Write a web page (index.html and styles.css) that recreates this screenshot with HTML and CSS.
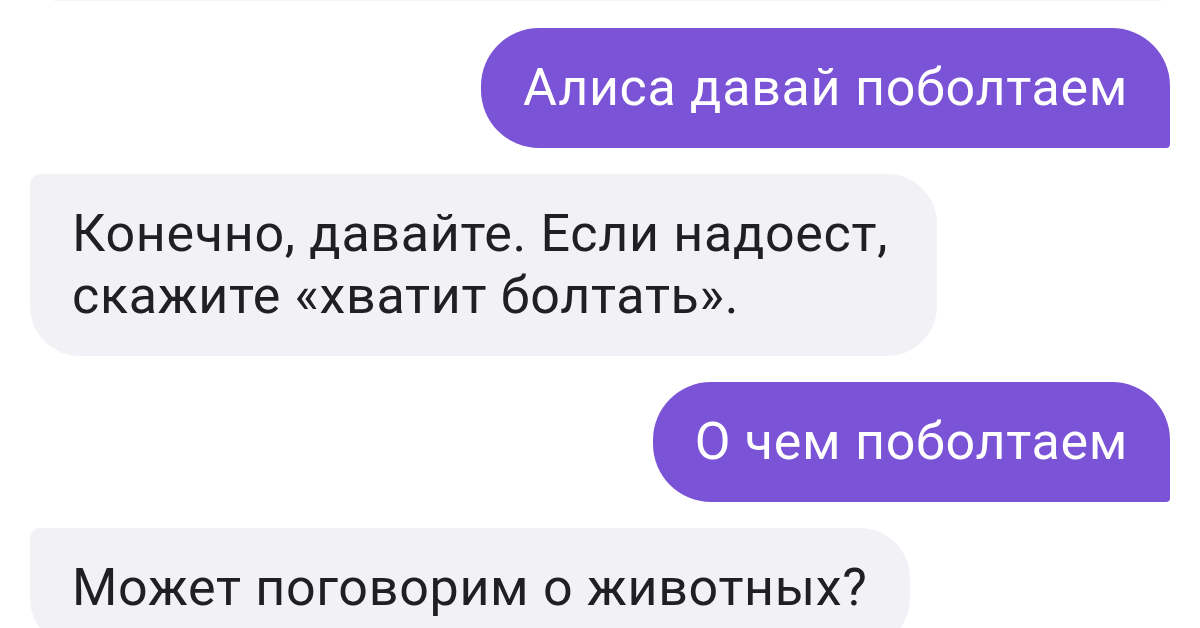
FILE: index.html
```html
<!DOCTYPE html>
<html lang="ru">
<head>
<meta charset="utf-8">
<title>Алиса</title>
<link rel="stylesheet" href="styles.css">
</head>
<body>
<main class="chat">
  <div class="msg msg-in msg-prev"></div>
  <div class="msg msg-out">Алиса давай поболтаем</div>
  <div class="msg msg-in msg-wrap">Конечно, давайте. Если надоест, скажите «хватит болтать».</div>
  <div class="msg msg-out">О чем поболтаем</div>
  <div class="msg msg-in">Может поговорим о животных?</div>
</main>
</body>
</html>
```
FILE: styles.css
```css
html, body {
  margin: 0;
  padding: 0;
  background: #ffffff;
  height: 628px;
  overflow: hidden;
}

.chat {
  display: flex;
  flex-direction: column;
  gap: 26px;
  padding: 0 30px;
  font-family: Roboto, "Noto Sans", sans-serif;
  font-size: 52px;
  line-height: 62px;
  letter-spacing: 0.7px;
}

.msg {
  padding: 29px 42px;
  box-sizing: border-box;
  width: fit-content;
}

.msg-out {
  align-self: flex-end;
  background: #7a53d6;
  color: #ffffff;
  border-radius: 58px 58px 4px 58px;
}

.msg-in {
  align-self: flex-start;
  background: #f2f1f6;
  color: #202024;
  border-radius: 10px 50px 50px 50px;
}

.msg-wrap {
  max-width: 907px;
}

.msg-prev {
  height: 60px;
  margin-top: -59px;
  margin-bottom: 1px;
  width: 1115px;
  margin-left: 20px;
  background: #f4f4f6;
  border-radius: 0 0 6px 6px;
}
```
